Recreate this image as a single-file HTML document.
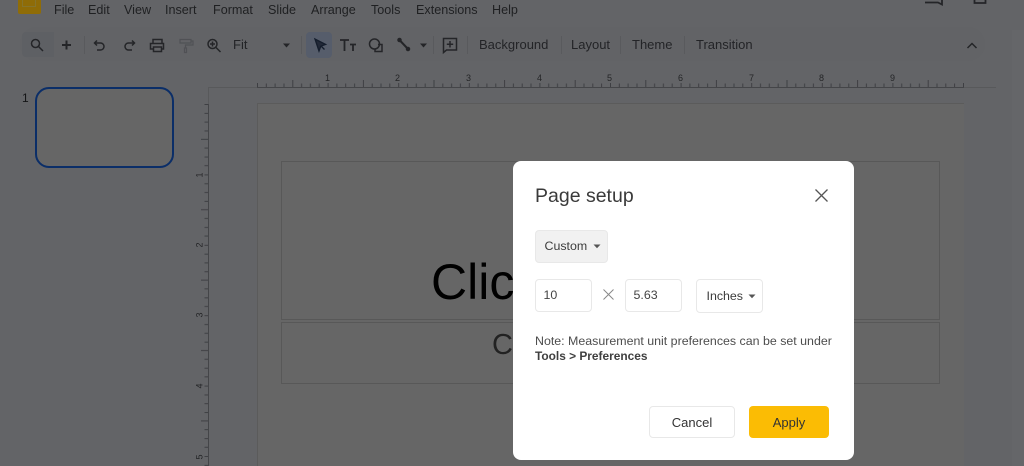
<!DOCTYPE html>
<html><head><meta charset="utf-8"><style>
html,body{margin:0;padding:0}
body{width:1024px;height:466px;overflow:hidden;position:relative;background:#636467;font-family:"Liberation Sans",sans-serif}
.a{position:absolute}
.t{position:absolute;white-space:nowrap;line-height:16px}
.m{font-size:12.6px;color:#1f2022;top:2px}
.b{font-size:13px;color:#232427;top:37px}
.sep{position:absolute;top:36px;width:1px;height:18px;background:#595a5d}
.r{font-size:9px;color:#242527;position:absolute;line-height:10px;white-space:nowrap}
.rv{transform:rotate(-90deg)}
.f{position:absolute;box-sizing:border-box;border:1px solid #e8e8e8;border-radius:4px;background:#fff;font-size:12.4px;color:#444;line-height:30px;height:33px}
</style></head><body>
<div class="a" style="left:18px;top:-6px;width:23px;height:20px;background:#8f6c07;border-radius:2px"></div>
<div class="a" style="left:22px;top:-6px;width:14px;height:13px;border:1.5px solid #85742c;box-sizing:border-box"></div>
<div class="t m" style="left:54px">File</div><div class="t m" style="left:88px">Edit</div><div class="t m" style="left:124px">View</div><div class="t m" style="left:165px">Insert</div><div class="t m" style="left:213px">Format</div><div class="t m" style="left:268px">Slide</div><div class="t m" style="left:311px">Arrange</div><div class="t m" style="left:371px">Tools</div><div class="t m" style="left:416px">Extensions</div><div class="t m" style="left:492px">Help</div>
<div class="a" style="left:20px;top:27px;width:965px;height:34px;border-radius:17px;background:#626366"></div>
<div class="a" style="left:22px;top:32px;width:32px;height:25px;border-radius:4px 0 0 4px;background:#5e6064"></div>
<div class="a" style="left:306px;top:32px;width:26px;height:26px;border-radius:4px;background:#565d6b"></div>
<svg class="a" style="left:0;top:0" width="1024" height="70" fill="none" stroke="#242528" stroke-width="1.5">
<circle cx="35.500" cy="43.500" r="4"/><path d="M38.500 46.500l4.500 4.500"/>
<path d="M62 45h9M66.500 40.500v9" stroke-width="2"/>
<path d="M97 45.500l-2.500-2.500 2.500-2.500M95 43h5.500a3.500 3.500 0 0 1 0 7H97"/>
<path d="M132 45.500l2.500-2.500-2.500-2.500M134 43h-5.500a3.500 3.500 0 0 0 0 7h3.500"/>
<path d="M153 43v-3.500h9v3.500M153 49h-2.500v-5.500h13v5.500H162M153.500 47h8v4.500h-8z"/>
<path d="M180 39.500h11v3.500h-11zM191 41h2v4h-7.500v3M184.500 48h2v4.500h-2z" stroke="#505155" stroke-width="1.200"/>
<circle cx="212.500" cy="44" r="4.500"/><path d="M216 47.500l4.500 4.500M210 44h5M212.500 41.500v5"/>
<path d="M283 43.500h7l-3.500 4z" fill="#242528" stroke="none"/>
<path d="M315 39l4 12 1.800-4.800 4.800-1.800zM321 46l3.500 3.500" stroke="#141d2c" fill="#222938" stroke-width="1.300"/>
<path d="M340 40h9M344.500 40v11M350 44.500h6M353 44.500v6.500" stroke-width="1.800"/>
<circle cx="374.500" cy="44" r="5"/><path d="M378 44.500h4v7h-7v-3"/>
<path d="M399 39.500l9 9.500" stroke-width="2"/><circle cx="399.500" cy="40" r="1.500" fill="#242528"/><circle cx="408" cy="49" r="1.500" fill="#242528"/>
<path d="M420 43.500h7l-3.500 4z" fill="#242528" stroke="none"/>
<path d="M443.500 38.500h13v11.500h-10l-3 2.500zM450 41v6.500M446.800 44.200h6.400"/>
<path d="M967.500 48l4.500-4.500 4.500 4.500"/>
<path d="M925 2.500h13l4 2v-5" stroke-width="1.800"/>
<path d="M974.500 0v3h11v-3" stroke-width="1.800"/>
</svg>
<div class="sep" style="left:84px"></div><div class="sep" style="left:301px"></div><div class="sep" style="left:433px"></div><div class="sep" style="left:467px"></div><div class="sep" style="left:561px"></div><div class="sep" style="left:620px"></div><div class="sep" style="left:684px"></div>
<div class="t b" style="left:233px">Fit</div><div class="t b" style="left:479px">Background</div><div class="t b" style="left:571px">Layout</div><div class="t b" style="left:632px">Theme</div><div class="t b" style="left:696px">Transition</div>

<div class="a" style="left:1012px;top:30px;width:12px;height:436px;background:#656669"></div>
<div class="a" style="left:208px;top:87px;width:1px;height:379px;background:#58595b"></div>
<div class="a" style="left:208px;top:87px;width:788px;height:1px;background:#58595b"></div>
<div class="a" style="left:257px;top:87px;width:707px;height:1px;background:#444548"></div>
<div class="a" style="left:208px;top:104px;width:1px;height:362px;background:#444548"></div>
<svg class="a" style="left:0;top:0" width="1024" height="466">
<defs>
<pattern id="h" x="257" y="76" width="70.600" height="11" patternUnits="userSpaceOnUse"><path d="M0.500 7v4M9.300 7.500v3.500M18.100 7.500v3.500M27 7.500v3.500M35.800 4v7M44.600 7.500v3.500M53.400 7.500v3.500M62.200 7.500v3.500" stroke="#3e3f43" stroke-width="1" fill="none"/></pattern>
<pattern id="v" x="196" y="104" width="12" height="70.400" patternUnits="userSpaceOnUse"><path d="M8.500 0.500h3.500M8.500 9.300h3.500M8.500 18.100h3.500M8.500 27h3.500M5 35.300h7M8.500 44.100h3.500M8.500 53h3.500M8.500 61.700h3.500" stroke="#3e3f43" stroke-width="1" fill="none"/></pattern>
</defs>
<rect x="257" y="76" width="707" height="11" fill="url(#h)"/>
<rect x="196" y="104" width="12" height="362" fill="url(#v)"/>
</svg>
<div class="r" style="left:325px;top:73px">1</div><div class="r" style="left:395px;top:73px">2</div><div class="r" style="left:466px;top:73px">3</div><div class="r" style="left:537px;top:73px">4</div><div class="r" style="left:607px;top:73px">5</div><div class="r" style="left:678px;top:73px">6</div><div class="r" style="left:749px;top:73px">7</div><div class="r" style="left:819px;top:73px">8</div><div class="r" style="left:890px;top:73px">9</div>
<div class="r rv" style="left:197px;top:170px">1</div><div class="r rv" style="left:197px;top:240px">2</div><div class="r rv" style="left:197px;top:310px">3</div><div class="r rv" style="left:197px;top:381px">4</div><div class="r rv" style="left:197px;top:452px">5</div>

<div class="a" style="left:257px;top:103px;width:707px;height:363px;background:#666;box-sizing:border-box;border-left:1px solid #5b5b5b;border-top:1px solid #5b5b5b"></div>
<div class="a" style="left:281px;top:161px;width:659px;height:159px;box-sizing:border-box;border:1px solid #585858"></div>
<div class="a" style="left:281px;top:322px;width:659px;height:62px;box-sizing:border-box;border:1px solid #585858"></div>
<div class="t" style="left:431px;top:252px;font-size:50px;line-height:60px;color:#000">Click</div>
<div class="t" style="left:492px;top:328px;font-size:29px;line-height:34px;color:#222">Click</div>

<div class="t" style="left:22px;top:90px;font-size:12px;color:#141517">1</div>
<div class="a" style="left:35px;top:87px;width:139px;height:81px;box-sizing:border-box;border:2px solid #0b2e68;border-radius:14px;background:#666"></div>

<div class="a" style="left:513px;top:161px;width:341px;height:299px;background:#fff;border-radius:8px"></div>
<div class="t" style="left:535px;top:184px;font-size:19.500px;line-height:24px;color:#3a3a3a">Page setup</div>
<svg class="a" style="left:813px;top:187px" width="18" height="18" fill="none" stroke="#555" stroke-width="1.300"><path d="M2.500 2.500l12 12M14.500 2.500l-12 12"/></svg>
<div class="f" style="left:535px;top:230px;width:73px;background:#f1f1f1;padding-left:8.500px;color:#3c3c3c">Custom</div>
<svg class="a" style="left:593px;top:244px" width="10" height="6"><path d="M0.500 0.500h7l-3.500 3.800z" fill="#555"/></svg>
<div class="f" style="left:535px;top:279px;width:57px;padding-left:7.500px">10</div>
<svg class="a" style="left:602px;top:288px" width="13" height="13" fill="none" stroke="#888" stroke-width="1"><path d="M1.500 1.500l10 10M11.500 1.500l-10 10"/></svg>
<div class="f" style="left:625px;top:279px;width:57px;padding-left:7.500px">5.63</div>
<div class="f" style="left:696px;top:279px;width:67px;height:34px;padding-left:9.500px;line-height:32px;color:#3c3c3c">Inches</div>
<svg class="a" style="left:748px;top:294px" width="10" height="6"><path d="M0.500 0.500h7l-3.500 3.800z" fill="#555"/></svg>
<div class="t" style="left:535px;top:333px;font-size:12.400px;color:#4d4d4d">Note: Measurement unit preferences can be set under</div>
<div class="t" style="left:535px;top:348px;font-size:11.900px;color:#3f3f3f;font-weight:bold">Tools &gt; Preferences</div>
<div class="a" style="left:649px;top:406px;width:86px;height:32px;box-sizing:border-box;border:1px solid #e8e8e8;border-radius:4px;background:#fff;text-align:center;line-height:31px;font-size:13px;color:#333">Cancel</div>
<div class="a" style="left:749px;top:406px;width:80px;height:32px;border-radius:4px;background:#fbbc04;text-align:center;line-height:33px;font-size:13px;color:#333">Apply</div>
</body></html>
